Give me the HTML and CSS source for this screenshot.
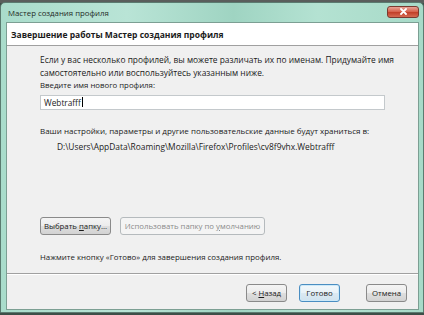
FILE: index.html
```html
<!DOCTYPE html>
<html lang="ru">
<head>
<meta charset="utf-8">
<link rel="stylesheet" href="styles.css">
</head>
<body>
<div class="desk">
  <div class="window">
    <div class="titlebar">
      <span class="title">Мастер создания профиля</span>
      <button class="close" aria-label="Закрыть">
        <svg width="9" height="7" viewBox="0 0 9 7"><path d="M2 1 L7 6 M7 1 L2 6" stroke="#fff" stroke-width="1.8" stroke-linecap="round"/></svg>
      </button>
    </div>
    <div class="client">
      <div class="header">Завершение работы Мастер создания профиля</div>
      <div class="content">
        <p class="para">Если у вас несколько профилей, вы можете различать их по именам. Придумайте имя самостоятельно или воспользуйтесь указанным ниже.</p>
        <label class="label">Введите имя нового профиля:</label>
        <div class="input"><span>Webtrafff</span><span class="caret"></span></div>
        <p class="info">Ваши настройки, параметры и другие пользовательские данные будут храниться в:</p>
        <p class="path">D:\Users\AppData\Roaming\Mozilla\Firefox\Profiles\cv8f9vhx.Webtrafff</p>
        <div class="folder-row">
          <button class="btn btn-folder"><span>Выбрать <u>п</u>апку...</span></button>
          <button class="btn btn-disabled"><span>Использовать папку по <u>у</u>молчанию</span></button>
        </div>
        <p class="finish">Нажмите кнопку «Готово» для завершения создания профиля.</p>
      </div>
      <div class="footer">
        <button class="btn btn-nav"><span>&lt; <u>Н</u>азад</span></button>
        <button class="btn btn-nav btn-default"><span>Готово</span></button>
        <button class="btn btn-nav btn-cancel"><span>Отмена</span></button>
      </div>
    </div>
  </div>
</div>
</body>
</html>
```
FILE: styles.css
```css
* { box-sizing: border-box; }
html, body { margin: 0; padding: 0; }
body {
  width: 424px; height: 315px; overflow: hidden;
  background: #3a4a44;
  font-family: "Open Sans", "Noto Sans", sans-serif;
  font-size: 8.3px;
  color: #1b1b1b;
}
.desk {
  width: 424px; height: 315px;
  padding-top: 2px;
  background: linear-gradient(#5a5e5c 0, #5a5e5c 3px, #3d4f48 3px);
}
.window {
  width: 424px; height: 311px;
  background: linear-gradient(90deg, #a9dccb 0%, #b9e4d6 30%, #9fd4c2 55%, #b4e2d2 75%, #a7dac8 100%);
  border: 1px solid #5b7b70;
  border-radius: 5px 5px 0 0;
  display: flex; flex-direction: column;
}
.titlebar {
  height: 19px;
  display: flex; align-items: center; justify-content: space-between;
  padding: 0 4px 0 7px;
}
.title { font-size: 7.8px; color: #1e2a26; }
.close {
  width: 32px; height: 12px; margin-top: -2px;
  border: 1px solid #7a3a30; border-radius: 3px;
  background: linear-gradient(#e7a396 0%, #d7654f 45%, #c2412a 55%, #d56b52 100%);
  display: flex; align-items: center; justify-content: center; padding: 0;
}
.client {
  flex: 1;
  margin: 0 4px 2px 5px;
  border: 1px solid #7c9f93;
  background: #f0f0f0;
  display: flex; flex-direction: column;
}
.header {
  height: 23px;
  background: #ffffff;
  border-bottom: 1px solid #a0a0a0;
  font-weight: bold;
  padding-left: 4px;
  display: flex; align-items: center;
  font-size: 8.5px;
}
.content {
  flex: 1;
  padding: 8px 20px 0 33px;
  display: flex; flex-direction: column;
}
.para { margin: 0; line-height: 12.5px; font-size: 8.4px; }
.label { line-height: 12.5px; font-size: 7.8px; }
.input {
  margin-top: 3px;
  height: 15px; width: 345px;
  background: #fff;
  border: 1px solid #c4c9cc;
  padding-left: 3px;
  display: flex; align-items: center;
}
.caret { width: 1px; height: 10px; background: #000; margin-left: 1px; }
.info { margin: 15px 0 0; line-height: 12.5px; white-space: nowrap; font-size: 8px; }
.path { margin: 3.5px 0 0 17px; line-height: 12.5px; font-size: 8.4px; white-space: nowrap; }
.folder-row { margin-top: 64px; display: flex; gap: 9px; }
.btn {
  font-family: inherit; font-size: 7.8px; color: #1b1b1b;
  height: 18px; padding: 0;
  border: 1px solid #8a8a8a; border-radius: 3px;
  background: linear-gradient(#f4f4f4 0%, #ececec 50%, #dfdfdf 51%, #d2d2d2 100%);
  display: flex; align-items: center; justify-content: center;
  white-space: nowrap;
}
.btn-folder { width: 71px; }
.btn-disabled {
  width: 145px;
  color: #8a8a8a;
  background: #f4f4f4;
  border-color: #b5babd;
}
.finish { margin: 15.5px 0 0; line-height: 12.5px; font-size: 7.9px; }
.footer {
  height: 36px;
  border-top: 1px solid #a0a0a0;
  box-shadow: inset 0 1px 0 #ffffff;
  display: flex; align-items: flex-start; justify-content: flex-end;
  padding: 10px 11px 0 0;
  gap: 12px;
}
.btn-nav { width: 41px; }
.btn-default {
  border-color: #4a8ec2;
  box-shadow: inset 0 0 0 1px #cde9f8;
  background: linear-gradient(#f2f8fb 0%, #e8f2f8 50%, #dbe9f2 51%, #d0e3ef 100%);
}
.btn-cancel { margin-left: 14px; }
u { text-decoration: underline; }
```
